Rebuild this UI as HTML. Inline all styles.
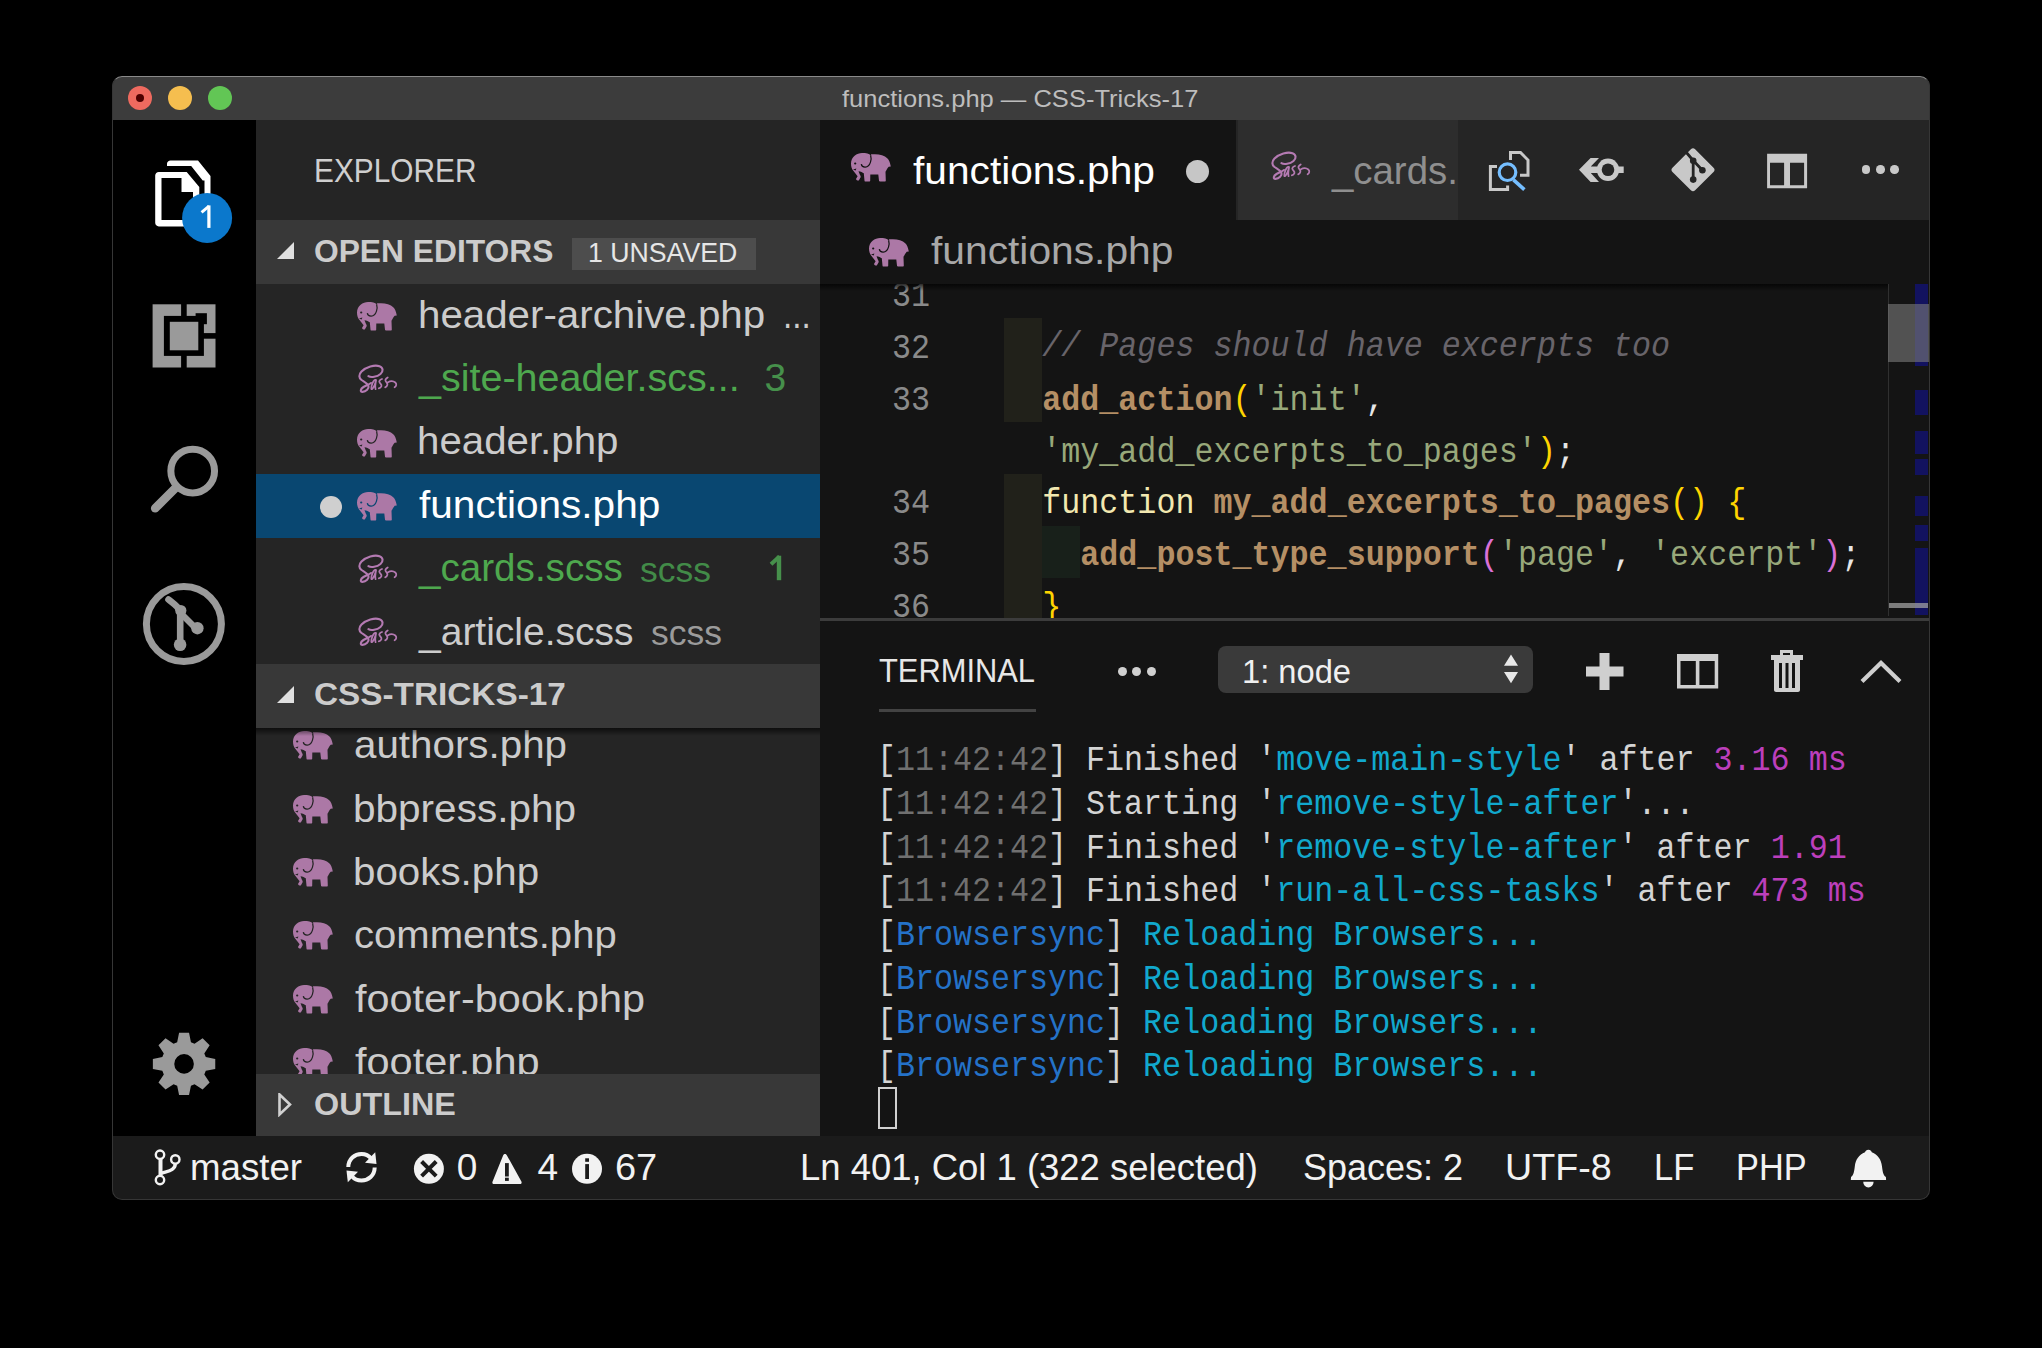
<!DOCTYPE html>
<html><head><meta charset="utf-8"><title>VS Code</title>
<style>
*{margin:0;padding:0;box-sizing:border-box}
html,body{width:2042px;height:1348px;background:#000;overflow:hidden}
body{font-family:"Liberation Sans",sans-serif}
.a{position:absolute}
.t{position:absolute;white-space:pre;transform-origin:0 0}
.sass{font-family:"Liberation Serif",serif;font-style:italic;color:#b67cb4;letter-spacing:-2px;transform:scaleX(1.05) rotate(-4deg)}
.mono{font-family:"Liberation Mono",monospace}
</style></head><body>

<div class="a" style="left:112px;top:76px;width:1818px;height:1124px;border-radius:10px;background:#1b1b1b;overflow:hidden">
</div>
<div class="a" style="left:112px;top:76px;width:1818px;height:1124px;border-radius:10px;overflow:hidden">
<div class="a" style="left:-112px;top:-76px;width:2042px;height:1348px">
<div class="a" style="left:112px;top:76px;width:1818px;height:44px;background:#3c3c3c"></div>
<div class="a" style="left:128px;top:86px;width:24px;height:24px;border-radius:50%;background:#ee6a5f"></div>
<div class="a" style="left:168px;top:86px;width:24px;height:24px;border-radius:50%;background:#f5be4f"></div>
<div class="a" style="left:208px;top:86px;width:24px;height:24px;border-radius:50%;background:#62c655"></div>
<div class="a" style="left:136px;top:94px;width:8px;height:8px;border-radius:50%;background:#4d0000"></div>
<div class="t" style="left:842.0px;top:87.4px;font-size:24.3px;line-height:24.3px;color:#bdbdbd;transform:scaleX(1.050);">functions.php — CSS-Tricks-17</div>
<div class="a" style="left:112px;top:120px;width:144px;height:1016px;background:#000"></div>
<div class="a" style="left:256px;top:120px;width:564px;height:1016px;background:#252525"></div>
<div class="t" style="left:313.9px;top:154.4px;font-size:33px;line-height:33px;color:#cfcfcf;transform:scaleX(0.904);">EXPLORER</div>
<div class="a" style="left:256px;top:220px;width:564px;height:64.2px;background:#383838"></div>
<svg class="a" style="left:277px;top:242px" width="18" height="18"><path d="M17,0 L17,17 L0,17 Z" fill="#e0e0e0"/></svg>
<div class="t" style="left:314.4px;top:235.8px;font-size:31px;line-height:31px;color:#cccccc;font-weight:bold;transform:scaleX(1.024);">OPEN EDITORS</div>
<div class="a" style="left:572px;top:238px;width:184px;height:32px;background:#4d4d4d"></div>
<div class="t" style="left:588.1px;top:239.1px;font-size:28px;line-height:28px;color:#e6e6e6;transform:scaleX(0.953);">1 UNSAVED</div>
<div class="a" style="left:256px;top:474.3px;width:564px;height:63.4px;background:#094771"></div>
<div class="a" style="left:319.6px;top:496.3px;width:22px;height:22px;border-radius:50%;background:#cfcfcf"></div>
<svg class="a" style="left:357.0px;top:302.2px" width="40" height="29" viewBox="5 6.4 40 29"><path d="M16,6.4 C11,6.4 5,10 5,17 C5,20 5.8,22.5 7.5,24.5 L11.6,29.6 L10,32.3 C10.5,33.5 11.8,34.3 12.8,33.8 L14.5,31 C15,30 14.5,29 14,28.3 L12.5,24.6 C14.5,25 16.8,25.8 17.8,26.7 L18.5,34.2 C18.6,34.8 19,35 19.5,35 L23.5,35 C24,35 24.2,34.7 24.2,34.2 L24.3,27.9 L32.3,27.9 L33,34.2 C33.1,34.7 33.5,35 34,35 L38.8,35 C39.4,35 39.8,34.6 39.8,34 L39.5,25.2 C40.5,23.5 41.5,21.5 42.7,20.2 L44.8,19.8 C44,16 43,13.5 41.5,12 C38.5,9 34,7.7 29,7.7 L25.3,7.7 L24.6,8.6 C23.5,7 20,6.4 16,6.4 Z" fill="#ac78a6"/><path d="M24.6,8.6 C25.3,11 25.3,13.5 24.5,15.5 C23.5,18.5 21.5,20.4 19.3,20.5 C17,20.6 15.5,19.2 15.3,17.6" fill="none" stroke="#252525" stroke-width="1.25"/><circle cx="9.2" cy="16.9" r="1.1" fill="#252525"/><path d="M7,22.9 L10.4,21.9 L9.6,23.9 Z" fill="#252525"/></svg>
<svg class="a" style="left:348.7px;top:357.5px" width="50" height="40" viewBox="0 0 50 40"><g fill="none" stroke="#b47ab2" stroke-linecap="round" stroke-linejoin="round"><path d="M19.4,18.2 C22,19.8 28,19 31.5,16 C34.5,13.5 34.3,9.5 30.5,8.2 C25.5,6.5 17,9 12.5,13.5 C9.5,16.5 9.8,20 12.5,22 C15,23.8 18.5,25 19.5,28 C20.3,30.5 17,33.8 13.5,33.9 C11,34 11.2,31 14.5,29 C17,27.5 20,26.5 22,25" stroke-width="2.1"/><path d="M26.4,21.8 C24.2,22 22,28 22.3,30.8 C22.6,32.3 25,29.8 26.9,23.2 M27.1,22 C26.5,25 25.8,28.5 26.6,31.2 M33,21 C31,21.8 29.6,23.2 30.6,24.6 C31.6,26 33,26.6 32.4,28.2 C31.9,29.5 30.8,30.2 29.8,30.4 M38.7,19.4 C37.2,20.2 36,21.5 36.6,23 C37.3,24.6 38.8,25.2 38.4,26.8 C38,28.3 37,29.2 36.2,29.4 M38.6,24.4 C40.8,23.2 44,22.6 46.3,24.5 C47.8,25.8 47.6,28.2 45.6,29.3" stroke-width="1.75"/></g></svg>
<svg class="a" style="left:357.0px;top:428.9px" width="40" height="29" viewBox="5 6.4 40 29"><path d="M16,6.4 C11,6.4 5,10 5,17 C5,20 5.8,22.5 7.5,24.5 L11.6,29.6 L10,32.3 C10.5,33.5 11.8,34.3 12.8,33.8 L14.5,31 C15,30 14.5,29 14,28.3 L12.5,24.6 C14.5,25 16.8,25.8 17.8,26.7 L18.5,34.2 C18.6,34.8 19,35 19.5,35 L23.5,35 C24,35 24.2,34.7 24.2,34.2 L24.3,27.9 L32.3,27.9 L33,34.2 C33.1,34.7 33.5,35 34,35 L38.8,35 C39.4,35 39.8,34.6 39.8,34 L39.5,25.2 C40.5,23.5 41.5,21.5 42.7,20.2 L44.8,19.8 C44,16 43,13.5 41.5,12 C38.5,9 34,7.7 29,7.7 L25.3,7.7 L24.6,8.6 C23.5,7 20,6.4 16,6.4 Z" fill="#ac78a6"/><path d="M24.6,8.6 C25.3,11 25.3,13.5 24.5,15.5 C23.5,18.5 21.5,20.4 19.3,20.5 C17,20.6 15.5,19.2 15.3,17.6" fill="none" stroke="#252525" stroke-width="1.25"/><circle cx="9.2" cy="16.9" r="1.1" fill="#252525"/><path d="M7,22.9 L10.4,21.9 L9.6,23.9 Z" fill="#252525"/></svg>
<svg class="a" style="left:357.0px;top:492.3px" width="40" height="29" viewBox="5 6.4 40 29"><path d="M16,6.4 C11,6.4 5,10 5,17 C5,20 5.8,22.5 7.5,24.5 L11.6,29.6 L10,32.3 C10.5,33.5 11.8,34.3 12.8,33.8 L14.5,31 C15,30 14.5,29 14,28.3 L12.5,24.6 C14.5,25 16.8,25.8 17.8,26.7 L18.5,34.2 C18.6,34.8 19,35 19.5,35 L23.5,35 C24,35 24.2,34.7 24.2,34.2 L24.3,27.9 L32.3,27.9 L33,34.2 C33.1,34.7 33.5,35 34,35 L38.8,35 C39.4,35 39.8,34.6 39.8,34 L39.5,25.2 C40.5,23.5 41.5,21.5 42.7,20.2 L44.8,19.8 C44,16 43,13.5 41.5,12 C38.5,9 34,7.7 29,7.7 L25.3,7.7 L24.6,8.6 C23.5,7 20,6.4 16,6.4 Z" fill="#ac78a6"/><path d="M24.6,8.6 C25.3,11 25.3,13.5 24.5,15.5 C23.5,18.5 21.5,20.4 19.3,20.5 C17,20.6 15.5,19.2 15.3,17.6" fill="none" stroke="#094771" stroke-width="1.25"/><circle cx="9.2" cy="16.9" r="1.1" fill="#094771"/><path d="M7,22.9 L10.4,21.9 L9.6,23.9 Z" fill="#094771"/></svg>
<svg class="a" style="left:348.7px;top:547.5px" width="50" height="40" viewBox="0 0 50 40"><g fill="none" stroke="#b47ab2" stroke-linecap="round" stroke-linejoin="round"><path d="M19.4,18.2 C22,19.8 28,19 31.5,16 C34.5,13.5 34.3,9.5 30.5,8.2 C25.5,6.5 17,9 12.5,13.5 C9.5,16.5 9.8,20 12.5,22 C15,23.8 18.5,25 19.5,28 C20.3,30.5 17,33.8 13.5,33.9 C11,34 11.2,31 14.5,29 C17,27.5 20,26.5 22,25" stroke-width="2.1"/><path d="M26.4,21.8 C24.2,22 22,28 22.3,30.8 C22.6,32.3 25,29.8 26.9,23.2 M27.1,22 C26.5,25 25.8,28.5 26.6,31.2 M33,21 C31,21.8 29.6,23.2 30.6,24.6 C31.6,26 33,26.6 32.4,28.2 C31.9,29.5 30.8,30.2 29.8,30.4 M38.7,19.4 C37.2,20.2 36,21.5 36.6,23 C37.3,24.6 38.8,25.2 38.4,26.8 C38,28.3 37,29.2 36.2,29.4 M38.6,24.4 C40.8,23.2 44,22.6 46.3,24.5 C47.8,25.8 47.6,28.2 45.6,29.3" stroke-width="1.75"/></g></svg>
<svg class="a" style="left:348.7px;top:610.9px" width="50" height="40" viewBox="0 0 50 40"><g fill="none" stroke="#b47ab2" stroke-linecap="round" stroke-linejoin="round"><path d="M19.4,18.2 C22,19.8 28,19 31.5,16 C34.5,13.5 34.3,9.5 30.5,8.2 C25.5,6.5 17,9 12.5,13.5 C9.5,16.5 9.8,20 12.5,22 C15,23.8 18.5,25 19.5,28 C20.3,30.5 17,33.8 13.5,33.9 C11,34 11.2,31 14.5,29 C17,27.5 20,26.5 22,25" stroke-width="2.1"/><path d="M26.4,21.8 C24.2,22 22,28 22.3,30.8 C22.6,32.3 25,29.8 26.9,23.2 M27.1,22 C26.5,25 25.8,28.5 26.6,31.2 M33,21 C31,21.8 29.6,23.2 30.6,24.6 C31.6,26 33,26.6 32.4,28.2 C31.9,29.5 30.8,30.2 29.8,30.4 M38.7,19.4 C37.2,20.2 36,21.5 36.6,23 C37.3,24.6 38.8,25.2 38.4,26.8 C38,28.3 37,29.2 36.2,29.4 M38.6,24.4 C40.8,23.2 44,22.6 46.3,24.5 C47.8,25.8 47.6,28.2 45.6,29.3" stroke-width="1.75"/></g></svg>
<svg class="a" style="left:760px;top:550px" width="30" height="35" viewBox="760 550 30 35"><rect x="776.8" y="555.7" width="4.4" height="24.5" fill="#46904b"/><path d="M771,564.3 L779.5,556.6" stroke="#46904b" stroke-width="4"/></svg>
<div class="t" style="left:417.9px;top:294.7px;font-size:39px;line-height:39px;color:#cccccc;transform:scaleX(1.033);">header-archive.php</div>
<div class="t" style="left:783.4px;top:294.7px;font-size:39px;line-height:39px;color:#cccccc;transform:scaleX(0.852);">...</div>
<div class="t" style="left:419.0px;top:358.0px;font-size:39px;line-height:39px;color:#4ea84e;transform:scaleX(1.013);">_site-header.scs...</div>
<div class="t" style="left:764.4px;top:358.0px;font-size:39px;line-height:39px;color:#46904b;">3</div>
<div class="t" style="left:417.3px;top:421.4px;font-size:39px;line-height:39px;color:#cccccc;transform:scaleX(1.032);">header.php</div>
<div class="t" style="left:419.0px;top:484.8px;font-size:39px;line-height:39px;color:#ffffff;transform:scaleX(1.040);">functions.php</div>
<div class="t" style="left:419.0px;top:548.1px;font-size:39px;line-height:39px;color:#4ea84e;transform:scaleX(0.990);">_cards.scss</div>
<div class="t" style="left:640.4px;top:552.0px;font-size:35px;line-height:35px;color:#428b48;transform:scaleX(1.015);">scss</div>
<div class="t" style="left:419.0px;top:611.5px;font-size:39px;line-height:39px;color:#cccccc;">_article.scss</div>
<div class="t" style="left:651.4px;top:615.4px;font-size:35px;line-height:35px;color:#9b9b9b;transform:scaleX(1.016);">scss</div>
<div class="a" style="left:256px;top:727.7px;width:564px;height:346px;overflow:hidden">
<div class="a" style="left:-256px;top:-727.7px;width:2042px;height:1348px">
<svg class="a" style="left:292.8px;top:731.1px" width="40" height="29" viewBox="5 6.4 40 29"><path d="M16,6.4 C11,6.4 5,10 5,17 C5,20 5.8,22.5 7.5,24.5 L11.6,29.6 L10,32.3 C10.5,33.5 11.8,34.3 12.8,33.8 L14.5,31 C15,30 14.5,29 14,28.3 L12.5,24.6 C14.5,25 16.8,25.8 17.8,26.7 L18.5,34.2 C18.6,34.8 19,35 19.5,35 L23.5,35 C24,35 24.2,34.7 24.2,34.2 L24.3,27.9 L32.3,27.9 L33,34.2 C33.1,34.7 33.5,35 34,35 L38.8,35 C39.4,35 39.8,34.6 39.8,34 L39.5,25.2 C40.5,23.5 41.5,21.5 42.7,20.2 L44.8,19.8 C44,16 43,13.5 41.5,12 C38.5,9 34,7.7 29,7.7 L25.3,7.7 L24.6,8.6 C23.5,7 20,6.4 16,6.4 Z" fill="#ac78a6"/><path d="M24.6,8.6 C25.3,11 25.3,13.5 24.5,15.5 C23.5,18.5 21.5,20.4 19.3,20.5 C17,20.6 15.5,19.2 15.3,17.6" fill="none" stroke="#252525" stroke-width="1.25"/><circle cx="9.2" cy="16.9" r="1.1" fill="#252525"/><path d="M7,22.9 L10.4,21.9 L9.6,23.9 Z" fill="#252525"/></svg>
<div class="t" style="left:354.0px;top:725.1px;font-size:39px;line-height:39px;color:#cccccc;transform:scaleX(1.034);">authors.php</div>
<svg class="a" style="left:292.8px;top:794.5px" width="40" height="29" viewBox="5 6.4 40 29"><path d="M16,6.4 C11,6.4 5,10 5,17 C5,20 5.8,22.5 7.5,24.5 L11.6,29.6 L10,32.3 C10.5,33.5 11.8,34.3 12.8,33.8 L14.5,31 C15,30 14.5,29 14,28.3 L12.5,24.6 C14.5,25 16.8,25.8 17.8,26.7 L18.5,34.2 C18.6,34.8 19,35 19.5,35 L23.5,35 C24,35 24.2,34.7 24.2,34.2 L24.3,27.9 L32.3,27.9 L33,34.2 C33.1,34.7 33.5,35 34,35 L38.8,35 C39.4,35 39.8,34.6 39.8,34 L39.5,25.2 C40.5,23.5 41.5,21.5 42.7,20.2 L44.8,19.8 C44,16 43,13.5 41.5,12 C38.5,9 34,7.7 29,7.7 L25.3,7.7 L24.6,8.6 C23.5,7 20,6.4 16,6.4 Z" fill="#ac78a6"/><path d="M24.6,8.6 C25.3,11 25.3,13.5 24.5,15.5 C23.5,18.5 21.5,20.4 19.3,20.5 C17,20.6 15.5,19.2 15.3,17.6" fill="none" stroke="#252525" stroke-width="1.25"/><circle cx="9.2" cy="16.9" r="1.1" fill="#252525"/><path d="M7,22.9 L10.4,21.9 L9.6,23.9 Z" fill="#252525"/></svg>
<div class="t" style="left:352.9px;top:788.5px;font-size:39px;line-height:39px;color:#cccccc;transform:scaleX(1.039);">bbpress.php</div>
<svg class="a" style="left:292.8px;top:857.9px" width="40" height="29" viewBox="5 6.4 40 29"><path d="M16,6.4 C11,6.4 5,10 5,17 C5,20 5.8,22.5 7.5,24.5 L11.6,29.6 L10,32.3 C10.5,33.5 11.8,34.3 12.8,33.8 L14.5,31 C15,30 14.5,29 14,28.3 L12.5,24.6 C14.5,25 16.8,25.8 17.8,26.7 L18.5,34.2 C18.6,34.8 19,35 19.5,35 L23.5,35 C24,35 24.2,34.7 24.2,34.2 L24.3,27.9 L32.3,27.9 L33,34.2 C33.1,34.7 33.5,35 34,35 L38.8,35 C39.4,35 39.8,34.6 39.8,34 L39.5,25.2 C40.5,23.5 41.5,21.5 42.7,20.2 L44.8,19.8 C44,16 43,13.5 41.5,12 C38.5,9 34,7.7 29,7.7 L25.3,7.7 L24.6,8.6 C23.5,7 20,6.4 16,6.4 Z" fill="#ac78a6"/><path d="M24.6,8.6 C25.3,11 25.3,13.5 24.5,15.5 C23.5,18.5 21.5,20.4 19.3,20.5 C17,20.6 15.5,19.2 15.3,17.6" fill="none" stroke="#252525" stroke-width="1.25"/><circle cx="9.2" cy="16.9" r="1.1" fill="#252525"/><path d="M7,22.9 L10.4,21.9 L9.6,23.9 Z" fill="#252525"/></svg>
<div class="t" style="left:352.9px;top:851.8px;font-size:39px;line-height:39px;color:#cccccc;transform:scaleX(1.034);">books.php</div>
<svg class="a" style="left:292.8px;top:921.2px" width="40" height="29" viewBox="5 6.4 40 29"><path d="M16,6.4 C11,6.4 5,10 5,17 C5,20 5.8,22.5 7.5,24.5 L11.6,29.6 L10,32.3 C10.5,33.5 11.8,34.3 12.8,33.8 L14.5,31 C15,30 14.5,29 14,28.3 L12.5,24.6 C14.5,25 16.8,25.8 17.8,26.7 L18.5,34.2 C18.6,34.8 19,35 19.5,35 L23.5,35 C24,35 24.2,34.7 24.2,34.2 L24.3,27.9 L32.3,27.9 L33,34.2 C33.1,34.7 33.5,35 34,35 L38.8,35 C39.4,35 39.8,34.6 39.8,34 L39.5,25.2 C40.5,23.5 41.5,21.5 42.7,20.2 L44.8,19.8 C44,16 43,13.5 41.5,12 C38.5,9 34,7.7 29,7.7 L25.3,7.7 L24.6,8.6 C23.5,7 20,6.4 16,6.4 Z" fill="#ac78a6"/><path d="M24.6,8.6 C25.3,11 25.3,13.5 24.5,15.5 C23.5,18.5 21.5,20.4 19.3,20.5 C17,20.6 15.5,19.2 15.3,17.6" fill="none" stroke="#252525" stroke-width="1.25"/><circle cx="9.2" cy="16.9" r="1.1" fill="#252525"/><path d="M7,22.9 L10.4,21.9 L9.6,23.9 Z" fill="#252525"/></svg>
<div class="t" style="left:354.0px;top:915.2px;font-size:39px;line-height:39px;color:#cccccc;transform:scaleX(1.027);">comments.php</div>
<svg class="a" style="left:292.8px;top:984.6px" width="40" height="29" viewBox="5 6.4 40 29"><path d="M16,6.4 C11,6.4 5,10 5,17 C5,20 5.8,22.5 7.5,24.5 L11.6,29.6 L10,32.3 C10.5,33.5 11.8,34.3 12.8,33.8 L14.5,31 C15,30 14.5,29 14,28.3 L12.5,24.6 C14.5,25 16.8,25.8 17.8,26.7 L18.5,34.2 C18.6,34.8 19,35 19.5,35 L23.5,35 C24,35 24.2,34.7 24.2,34.2 L24.3,27.9 L32.3,27.9 L33,34.2 C33.1,34.7 33.5,35 34,35 L38.8,35 C39.4,35 39.8,34.6 39.8,34 L39.5,25.2 C40.5,23.5 41.5,21.5 42.7,20.2 L44.8,19.8 C44,16 43,13.5 41.5,12 C38.5,9 34,7.7 29,7.7 L25.3,7.7 L24.6,8.6 C23.5,7 20,6.4 16,6.4 Z" fill="#ac78a6"/><path d="M24.6,8.6 C25.3,11 25.3,13.5 24.5,15.5 C23.5,18.5 21.5,20.4 19.3,20.5 C17,20.6 15.5,19.2 15.3,17.6" fill="none" stroke="#252525" stroke-width="1.25"/><circle cx="9.2" cy="16.9" r="1.1" fill="#252525"/><path d="M7,22.9 L10.4,21.9 L9.6,23.9 Z" fill="#252525"/></svg>
<div class="t" style="left:355.0px;top:978.6px;font-size:39px;line-height:39px;color:#cccccc;transform:scaleX(1.062);">footer-book.php</div>
<svg class="a" style="left:292.8px;top:1047.9px" width="40" height="29" viewBox="5 6.4 40 29"><path d="M16,6.4 C11,6.4 5,10 5,17 C5,20 5.8,22.5 7.5,24.5 L11.6,29.6 L10,32.3 C10.5,33.5 11.8,34.3 12.8,33.8 L14.5,31 C15,30 14.5,29 14,28.3 L12.5,24.6 C14.5,25 16.8,25.8 17.8,26.7 L18.5,34.2 C18.6,34.8 19,35 19.5,35 L23.5,35 C24,35 24.2,34.7 24.2,34.2 L24.3,27.9 L32.3,27.9 L33,34.2 C33.1,34.7 33.5,35 34,35 L38.8,35 C39.4,35 39.8,34.6 39.8,34 L39.5,25.2 C40.5,23.5 41.5,21.5 42.7,20.2 L44.8,19.8 C44,16 43,13.5 41.5,12 C38.5,9 34,7.7 29,7.7 L25.3,7.7 L24.6,8.6 C23.5,7 20,6.4 16,6.4 Z" fill="#ac78a6"/><path d="M24.6,8.6 C25.3,11 25.3,13.5 24.5,15.5 C23.5,18.5 21.5,20.4 19.3,20.5 C17,20.6 15.5,19.2 15.3,17.6" fill="none" stroke="#252525" stroke-width="1.25"/><circle cx="9.2" cy="16.9" r="1.1" fill="#252525"/><path d="M7,22.9 L10.4,21.9 L9.6,23.9 Z" fill="#252525"/></svg>
<div class="t" style="left:355.0px;top:1041.9px;font-size:39px;line-height:39px;color:#cccccc;transform:scaleX(1.064);">footer.php</div>
</div></div>
<div class="a" style="left:256px;top:727.7px;width:564px;height:8px;background:linear-gradient(#000000a0,#00000000)"></div>
<div class="a" style="left:256px;top:664.3px;width:564px;height:63.4px;background:#383838"></div>
<svg class="a" style="left:277px;top:686px" width="18" height="18"><path d="M17,0 L17,17 L0,17 Z" fill="#e0e0e0"/></svg>
<div class="t" style="left:314.3px;top:679.3px;font-size:31px;line-height:31px;color:#cccccc;font-weight:bold;transform:scaleX(1.075);">CSS-TRICKS-17</div>
<div class="a" style="left:256px;top:1073.6px;width:564px;height:62.4px;background:#383838"></div>
<svg class="a" style="left:278px;top:1093px" width="14" height="24"><path d="M1.5,1.5 L12,11.5 L1.5,21.5 Z" fill="none" stroke="#d0d0d0" stroke-width="2.6" stroke-linejoin="miter"/></svg>
<div class="t" style="left:314.2px;top:1088.6px;font-size:31px;line-height:31px;color:#cccccc;font-weight:bold;transform:scaleX(1.042);">OUTLINE</div>
<div class="a" style="left:820px;top:120px;width:1110px;height:100px;background:#252525"></div>
<div class="a" style="left:820px;top:120px;width:416px;height:100px;background:#141414"></div>
<div class="a" style="left:1236px;top:120px;width:222px;height:100px;background:#2d2d2d;border-left:2px solid #252525"></div>
<svg class="a" style="left:851.0px;top:152.5px" width="40" height="29" viewBox="5 6.4 40 29"><path d="M16,6.4 C11,6.4 5,10 5,17 C5,20 5.8,22.5 7.5,24.5 L11.6,29.6 L10,32.3 C10.5,33.5 11.8,34.3 12.8,33.8 L14.5,31 C15,30 14.5,29 14,28.3 L12.5,24.6 C14.5,25 16.8,25.8 17.8,26.7 L18.5,34.2 C18.6,34.8 19,35 19.5,35 L23.5,35 C24,35 24.2,34.7 24.2,34.2 L24.3,27.9 L32.3,27.9 L33,34.2 C33.1,34.7 33.5,35 34,35 L38.8,35 C39.4,35 39.8,34.6 39.8,34 L39.5,25.2 C40.5,23.5 41.5,21.5 42.7,20.2 L44.8,19.8 C44,16 43,13.5 41.5,12 C38.5,9 34,7.7 29,7.7 L25.3,7.7 L24.6,8.6 C23.5,7 20,6.4 16,6.4 Z" fill="#ac78a6"/><path d="M24.6,8.6 C25.3,11 25.3,13.5 24.5,15.5 C23.5,18.5 21.5,20.4 19.3,20.5 C17,20.6 15.5,19.2 15.3,17.6" fill="none" stroke="#141414" stroke-width="1.25"/><circle cx="9.2" cy="16.9" r="1.1" fill="#141414"/><path d="M7,22.9 L10.4,21.9 L9.6,23.9 Z" fill="#141414"/></svg>
<div class="t" style="left:912.7px;top:151.1px;font-size:39px;line-height:39px;color:#ffffff;transform:scaleX(1.043);">functions.php</div>
<div class="a" style="left:1185.5px;top:159.5px;width:23px;height:23px;border-radius:50%;background:#c6c6c6"></div>
<svg class="a" style="left:1262.0px;top:145.0px" width="50" height="40" viewBox="0 0 50 40"><g fill="none" stroke="#b47ab2" stroke-linecap="round" stroke-linejoin="round"><path d="M19.4,18.2 C22,19.8 28,19 31.5,16 C34.5,13.5 34.3,9.5 30.5,8.2 C25.5,6.5 17,9 12.5,13.5 C9.5,16.5 9.8,20 12.5,22 C15,23.8 18.5,25 19.5,28 C20.3,30.5 17,33.8 13.5,33.9 C11,34 11.2,31 14.5,29 C17,27.5 20,26.5 22,25" stroke-width="2.1"/><path d="M26.4,21.8 C24.2,22 22,28 22.3,30.8 C22.6,32.3 25,29.8 26.9,23.2 M27.1,22 C26.5,25 25.8,28.5 26.6,31.2 M33,21 C31,21.8 29.6,23.2 30.6,24.6 C31.6,26 33,26.6 32.4,28.2 C31.9,29.5 30.8,30.2 29.8,30.4 M38.7,19.4 C37.2,20.2 36,21.5 36.6,23 C37.3,24.6 38.8,25.2 38.4,26.8 C38,28.3 37,29.2 36.2,29.4 M38.6,24.4 C40.8,23.2 44,22.6 46.3,24.5 C47.8,25.8 47.6,28.2 45.6,29.3" stroke-width="1.75"/></g></svg>
<div class="a" style="left:1238px;top:120px;width:220px;height:100px;overflow:hidden"><div class="a" style="left:-1238px;top:-120px;width:2042px;height:400px">
<div class="t" style="left:1332.0px;top:151.1px;font-size:39px;line-height:39px;color:#8f8f8f;transform:scaleX(0.984);">_cards.</div>
</div></div>
<div class="a" style="left:820px;top:220px;width:1110px;height:398px;background:#141414"></div>
<svg class="a" style="left:869.0px;top:238.4px" width="40" height="29" viewBox="5 6.4 40 29"><path d="M16,6.4 C11,6.4 5,10 5,17 C5,20 5.8,22.5 7.5,24.5 L11.6,29.6 L10,32.3 C10.5,33.5 11.8,34.3 12.8,33.8 L14.5,31 C15,30 14.5,29 14,28.3 L12.5,24.6 C14.5,25 16.8,25.8 17.8,26.7 L18.5,34.2 C18.6,34.8 19,35 19.5,35 L23.5,35 C24,35 24.2,34.7 24.2,34.2 L24.3,27.9 L32.3,27.9 L33,34.2 C33.1,34.7 33.5,35 34,35 L38.8,35 C39.4,35 39.8,34.6 39.8,34 L39.5,25.2 C40.5,23.5 41.5,21.5 42.7,20.2 L44.8,19.8 C44,16 43,13.5 41.5,12 C38.5,9 34,7.7 29,7.7 L25.3,7.7 L24.6,8.6 C23.5,7 20,6.4 16,6.4 Z" fill="#ac78a6"/><path d="M24.6,8.6 C25.3,11 25.3,13.5 24.5,15.5 C23.5,18.5 21.5,20.4 19.3,20.5 C17,20.6 15.5,19.2 15.3,17.6" fill="none" stroke="#141414" stroke-width="1.25"/><circle cx="9.2" cy="16.9" r="1.1" fill="#141414"/><path d="M7,22.9 L10.4,21.9 L9.6,23.9 Z" fill="#141414"/></svg>
<div class="t" style="left:930.5px;top:231.0px;font-size:39px;line-height:39px;color:#a8a8a8;transform:scaleX(1.045);">functions.php</div>
<div class="a" style="left:1004.2px;top:318px;width:37.8px;height:104px;background:#21211a"></div>
<div class="a" style="left:1004.2px;top:474px;width:37.8px;height:144px;background:#21211a"></div>
<div class="a" style="left:1042px;top:526px;width:38px;height:52px;background:#18201a"></div>
<div class="a" style="left:820px;top:284.2px;width:1068px;height:333.8px;overflow:hidden">
<div class="a" style="left:-820px;top:-284.2px;width:2042px;height:1348px">
<div class="t mono" style="left:830px;width:100.0px;text-align:right;top:282.91px;font-size:31.712px;line-height:31.712px;color:#8a8a8a;transform:scaleY(1.08);transform-origin:0 24.29px">31</div>
<div class="t mono" style="left:830px;width:100.0px;text-align:right;top:334.81px;font-size:31.712px;line-height:31.712px;color:#8a8a8a;transform:scaleY(1.08);transform-origin:0 24.29px">32</div>
<div class="t mono" style="left:830px;width:100.0px;text-align:right;top:386.71px;font-size:31.712px;line-height:31.712px;color:#8a8a8a;transform:scaleY(1.08);transform-origin:0 24.29px">33</div>
<div class="t mono" style="left:830px;width:100.0px;text-align:right;top:490.41px;font-size:31.712px;line-height:31.712px;color:#8a8a8a;transform:scaleY(1.08);transform-origin:0 24.29px">34</div>
<div class="t mono" style="left:830px;width:100.0px;text-align:right;top:542.21px;font-size:31.712px;line-height:31.712px;color:#8a8a8a;transform:scaleY(1.08);transform-origin:0 24.29px">35</div>
<div class="t mono" style="left:830px;width:100.0px;text-align:right;top:594.01px;font-size:31.712px;line-height:31.712px;color:#8a8a8a;transform:scaleY(1.08);transform-origin:0 24.29px">36</div>
<div class="t mono" style="left:1004.20px;top:332.81px;font-size:31.712px;line-height:31.712px;transform:scaleY(1.080);transform-origin:0 24.29px;"><span style="color:#68646a;font-style:italic">  // Pages should have excerpts too</span></div>
<div class="t mono" style="left:1004.20px;top:386.71px;font-size:31.712px;line-height:31.712px;transform:scaleY(1.080);transform-origin:0 24.29px;"><span style="color:#e6e6e6">  </span><span style="color:#b58f65;font-weight:bold">add_action</span><span style="color:#ffd400">(</span><span style="color:#98a87a">'init'</span><span style="color:#e6e6e6">,</span></div>
<div class="t mono" style="left:1004.20px;top:438.51px;font-size:31.712px;line-height:31.712px;transform:scaleY(1.080);transform-origin:0 24.29px;"><span style="color:#e6e6e6">  </span><span style="color:#98a87a">'my_add_excerpts_to_pages'</span><span style="color:#ffd400">)</span><span style="color:#e6e6e6">;</span></div>
<div class="t mono" style="left:1004.20px;top:490.41px;font-size:31.712px;line-height:31.712px;transform:scaleY(1.080);transform-origin:0 24.29px;"><span style="color:#e6e6e6">  </span><span style="color:#f2e8b0">function</span><span style="color:#e6e6e6"> </span><span style="color:#b58f65;font-weight:bold">my_add_excerpts_to_pages</span><span style="color:#ffd400">()</span><span style="color:#e6e6e6"> </span><span style="color:#ffd400">{</span></div>
<div class="t mono" style="left:1004.20px;top:542.21px;font-size:31.712px;line-height:31.712px;transform:scaleY(1.080);transform-origin:0 24.29px;"><span style="color:#e6e6e6">    </span><span style="color:#b58f65;font-weight:bold">add_post_type_support</span><span style="color:#da70d6">(</span><span style="color:#98a87a">'page'</span><span style="color:#e6e6e6">, </span><span style="color:#98a87a">'excerpt'</span><span style="color:#da70d6">)</span><span style="color:#e6e6e6">;</span></div>
<div class="t mono" style="left:1004.20px;top:594.01px;font-size:31.712px;line-height:31.712px;transform:scaleY(1.080);transform-origin:0 24.29px;"><span style="color:#e6e6e6">  </span><span style="color:#ffd400">}</span></div>
</div></div>
<div class="a" style="left:820px;top:284.2px;width:1068px;height:7px;background:linear-gradient(#000000b0,#00000000)"></div>
<div class="a" style="left:1888px;top:284.2px;width:1.2px;height:331.5px;background:#303030"></div>
<div class="a" style="left:1915px;top:284.2px;width:13px;height:81.8px;background:#12125f"></div>
<div class="a" style="left:1915px;top:390.0px;width:13px;height:25.0px;background:#12125f"></div>
<div class="a" style="left:1915px;top:431.4px;width:13px;height:22.6px;background:#12125f"></div>
<div class="a" style="left:1915px;top:459.4px;width:13px;height:15.9px;background:#12125f"></div>
<div class="a" style="left:1915px;top:495.6px;width:13px;height:20.9px;background:#12125f"></div>
<div class="a" style="left:1915px;top:524.7px;width:13px;height:16.0px;background:#12125f"></div>
<div class="a" style="left:1915px;top:547.8px;width:13px;height:67.7px;background:#12125f"></div>
<div class="a" style="left:1888px;top:303.8px;width:42px;height:58.2px;background:rgba(121,121,121,0.62)"></div>
<div class="a" style="left:1889px;top:603px;width:39px;height:5px;background:rgba(160,160,160,0.75)"></div>
<div class="a" style="left:820px;top:618px;width:1110px;height:518px;background:#141414"></div>
<div class="a" style="left:820px;top:618px;width:1110px;height:3px;background:#3c3c3c"></div>
<div class="t" style="left:879.2px;top:654.5px;font-size:32.7px;line-height:32.7px;color:#e7e7e7;transform:scaleX(0.944);">TERMINAL</div>
<div class="a" style="left:879px;top:708.5px;width:157px;height:3px;background:#434343"></div>
<div class="a" style="left:1117.8px;top:667px;width:9.2px;height:9.2px;border-radius:50%;background:#d0d0d0"></div>
<div class="a" style="left:1132.2px;top:667px;width:9.2px;height:9.2px;border-radius:50%;background:#d0d0d0"></div>
<div class="a" style="left:1146.6px;top:667px;width:9.2px;height:9.2px;border-radius:50%;background:#d0d0d0"></div>
<div class="a" style="left:1218px;top:646px;width:315px;height:47.4px;border-radius:8px;background:#3a3a3a"></div>
<div class="t" style="left:1241.5px;top:654.6px;font-size:33px;line-height:33px;color:#f0f0f0;transform:scaleX(0.990);">1: node</div>
<svg class="a" style="left:1500px;top:650px" width="24" height="40"><path d="M4,15.8 L11,4.5 L18,15.8 Z M4,22 L11,33.3 L18,22 Z" fill="#e8e8e8"/></svg>
<svg class="a" style="left:1586px;top:652.8px" width="38" height="37"><path d="M13.5,0 H23.5 V13.5 H37.5 V23.5 H23.5 V37 H13.5 V23.5 H0 V13.5 H13.5 Z" fill="#cfcfcf"/></svg>
<svg class="a" style="left:1676.8px;top:653.9px" width="42" height="35"><path d="M0,0 H41.2 V34.5 H0 Z M3.5,7 V31 H18.8 V7 Z M22.4,7 V31 H37.7 V7 Z" fill="#cfcfcf" fill-rule="evenodd"/></svg>
<svg class="a" style="left:1770px;top:650px" width="34" height="42"><path d="M10,0 H23 V5 H33 V10 H30 V40 C30,41 29,42 28,42 H6 C5,42 4,41 4,40 V10 H1 V5 H10 Z M13,3 V5 H20 V3 Z M9,13 V38 H12 V13 Z M15.5,13 V38 H18.5 V13 Z M22,13 V38 H25 V13 Z" fill="#cfcfcf" fill-rule="evenodd"/></svg>
<svg class="a" style="left:1860px;top:659px" width="42" height="25"><path d="M2,22.5 L21,4 L40,22.5" fill="none" stroke="#cfcfcf" stroke-width="4.2"/></svg>
<div class="t mono" style="left:876.90px;top:747.11px;font-size:31.704px;line-height:31.704px;transform:scaleY(1.080);transform-origin:0 24.29px;"><span style="color:#d4d4d4">[</span><span style="color:#707070">11:42:42</span><span style="color:#d4d4d4">] Finished '</span><span style="color:#11a8cd">move-main-style</span><span style="color:#d4d4d4">' after </span><span style="color:#bc3fbc">3.16 ms</span></div>
<div class="t mono" style="left:876.90px;top:790.86px;font-size:31.704px;line-height:31.704px;transform:scaleY(1.080);transform-origin:0 24.29px;"><span style="color:#d4d4d4">[</span><span style="color:#707070">11:42:42</span><span style="color:#d4d4d4">] Starting '</span><span style="color:#11a8cd">remove-style-after</span><span style="color:#d4d4d4">'...</span></div>
<div class="t mono" style="left:876.90px;top:834.61px;font-size:31.704px;line-height:31.704px;transform:scaleY(1.080);transform-origin:0 24.29px;"><span style="color:#d4d4d4">[</span><span style="color:#707070">11:42:42</span><span style="color:#d4d4d4">] Finished '</span><span style="color:#11a8cd">remove-style-after</span><span style="color:#d4d4d4">' after </span><span style="color:#bc3fbc">1.91</span></div>
<div class="t mono" style="left:876.90px;top:878.36px;font-size:31.704px;line-height:31.704px;transform:scaleY(1.080);transform-origin:0 24.29px;"><span style="color:#d4d4d4">[</span><span style="color:#707070">11:42:42</span><span style="color:#d4d4d4">] Finished '</span><span style="color:#11a8cd">run-all-css-tasks</span><span style="color:#d4d4d4">' after </span><span style="color:#bc3fbc">473 ms</span></div>
<div class="t mono" style="left:876.90px;top:922.11px;font-size:31.704px;line-height:31.704px;transform:scaleY(1.080);transform-origin:0 24.29px;"><span style="color:#d4d4d4">[</span><span style="color:#2472c8">Browsersync</span><span style="color:#d4d4d4">] </span><span style="color:#11a8cd">Reloading Browsers...</span></div>
<div class="t mono" style="left:876.90px;top:965.86px;font-size:31.704px;line-height:31.704px;transform:scaleY(1.080);transform-origin:0 24.29px;"><span style="color:#d4d4d4">[</span><span style="color:#2472c8">Browsersync</span><span style="color:#d4d4d4">] </span><span style="color:#11a8cd">Reloading Browsers...</span></div>
<div class="t mono" style="left:876.90px;top:1009.61px;font-size:31.704px;line-height:31.704px;transform:scaleY(1.080);transform-origin:0 24.29px;"><span style="color:#d4d4d4">[</span><span style="color:#2472c8">Browsersync</span><span style="color:#d4d4d4">] </span><span style="color:#11a8cd">Reloading Browsers...</span></div>
<div class="t mono" style="left:876.90px;top:1053.36px;font-size:31.704px;line-height:31.704px;transform:scaleY(1.080);transform-origin:0 24.29px;"><span style="color:#d4d4d4">[</span><span style="color:#2472c8">Browsersync</span><span style="color:#d4d4d4">] </span><span style="color:#11a8cd">Reloading Browsers...</span></div>
<div class="a" style="left:878.3px;top:1086.5px;width:19px;height:42.5px;border:2.6px solid #d0d0d0"></div>
<div class="a" style="left:112px;top:1136px;width:1818px;height:64px;background:#1b1b1b"></div>
<div class="t" style="left:190.0px;top:1149.2px;font-size:37px;line-height:37px;color:#f2f2f2;transform:scaleX(0.991);">master</div>
<div class="t" style="left:456.8px;top:1149.2px;font-size:37px;line-height:37px;color:#f2f2f2;">0</div>
<div class="t" style="left:537.4px;top:1149.2px;font-size:37px;line-height:37px;color:#f2f2f2;">4</div>
<div class="t" style="left:614.9px;top:1149.2px;font-size:37px;line-height:37px;color:#f2f2f2;transform:scaleX(1.026);">67</div>
<div class="t" style="left:800.4px;top:1149.2px;font-size:37px;line-height:37px;color:#f2f2f2;transform:scaleX(0.985);">Ln 401, Col 1 (322 selected)</div>
<div class="t" style="left:1303.1px;top:1149.2px;font-size:37px;line-height:37px;color:#f2f2f2;transform:scaleX(0.973);">Spaces: 2</div>
<div class="t" style="left:1504.7px;top:1149.2px;font-size:37px;line-height:37px;color:#f2f2f2;transform:scaleX(1.018);">UTF-8</div>
<div class="t" style="left:1654.0px;top:1149.2px;font-size:37px;line-height:37px;color:#f2f2f2;transform:scaleX(0.936);">LF</div>
<div class="t" style="left:1736.2px;top:1149.2px;font-size:37px;line-height:37px;color:#f2f2f2;transform:scaleX(0.928);">PHP</div>
<svg class="a" style="left:140.0px;top:150.0px;" width="100.0" height="100.0" viewBox="0 0 100.0 100.0"><path d="M27,16 L27,13.8 C27,11.9 28.6,10.4 30.5,10.4 L58,10.4 L70.5,26 L70.5,62 L64.5,62 L64.5,30.4 L62.7,30.4 L51.2,16 Z" fill="#fff"/><path d="M15.2,25.5 C15.2,23.5 16.8,21.9 18.8,21.9 L46.7,21.9 L59.3,37.1 L59.3,76.4 L18.8,76.4 C16.8,76.4 15.2,74.8 15.2,72.8 Z M21.5,28 L21.5,70.1 L53,70.1 L53,41.9 L41.5,41.9 L41.5,28 Z" fill="#fff" fill-rule="evenodd"/><circle cx="67.1" cy="67.9" r="25" fill="#0b78cc"/></svg>
<svg class="a" style="left:140.0px;top:150.0px;" width="100.0" height="100.0" viewBox="0 0 100.0 100.0"><rect x="67.3" y="55.4" width="3.2" height="22.5" fill="#fff"/><path d="M61.6,62.3 L69,56.2" stroke="#fff" stroke-width="3"/></svg>
<svg class="a" style="left:144.0px;top:296.0px;" width="80.0" height="80.0" viewBox="0 0 80.0 80.0"><rect x="8.6" y="8.3" width="62.9" height="63.2" fill="#9a9a9a"/><rect x="37.1" y="7" width="5.6" height="14" fill="#000"/><rect x="37.1" y="58.9" width="5.6" height="14" fill="#000"/><rect x="58.9" y="37.1" width="14" height="5.6" fill="#000"/><rect x="19.9" y="19.9" width="40" height="40" fill="#000"/><rect x="51.6" y="17.2" width="11.3" height="11" fill="#000"/><rect x="25.8" y="25.8" width="28.5" height="28.5" fill="#9a9a9a"/></svg>
<svg class="a" style="left:140.0px;top:436.0px;" width="90.0" height="90.0" viewBox="0 0 90.0 90.0"><circle cx="52.7" cy="35.05" r="21.85" fill="none" stroke="#9a9a9a" stroke-width="7"/><path d="M36.5,51 L15.2,72.3" stroke="#9a9a9a" stroke-width="8.6" stroke-linecap="round"/></svg>
<svg class="a" style="left:134.0px;top:574.0px;" width="100.0" height="100.0" viewBox="0 0 100.0 100.0"><circle cx="49.9" cy="50.05" r="37.5" fill="none" stroke="#9a9a9a" stroke-width="7"/><path d="M34.5,25.5 C40,30 45.5,33 46.2,40 L46.2,68" fill="none" stroke="#9a9a9a" stroke-width="6.6" stroke-linecap="round"/><path d="M49.5,42 L62.5,55" fill="none" stroke="#9a9a9a" stroke-width="6.4" stroke-linecap="round"/><circle cx="46.8" cy="36.5" r="5.6" fill="#9a9a9a"/><circle cx="46.1" cy="70.8" r="6.3" fill="#9a9a9a"/><circle cx="63.4" cy="54.2" r="6.2" fill="#9a9a9a"/></svg>
<svg class="a" style="left:144.0px;top:1024.0px;" width="80.0" height="80.0" viewBox="0 0 80.0 80.0"><path d="M33.17,18.17 L35.08,8.70 L45.04,8.70 L46.95,18.17 L50.55,19.66 L58.60,14.31 L65.65,21.36 L60.30,29.41 L61.79,33.01 L71.26,34.92 L71.26,44.88 L61.79,46.79 L60.30,50.39 L65.65,58.44 L58.60,65.49 L50.55,60.14 L46.95,61.63 L45.04,71.10 L35.08,71.10 L33.17,61.63 L29.57,60.14 L21.52,65.49 L14.47,58.44 L19.82,50.39 L18.33,46.79 L8.86,44.88 L8.86,34.92 L18.33,33.01 L19.82,29.41 L14.47,21.36 L21.52,14.31 L29.57,19.66 Z M40.06,39.90 m-9.8,0 a9.8,9.8 0 1,0 19.6,0 a9.8,9.8 0 1,0 -19.6,0 Z" fill="#9a9a9a" fill-rule="evenodd"/></svg>
<svg class="a" style="left:1400.0px;top:110.0px;" width="160.0" height="130.0" viewBox="0 0 160.0 130.0"><path d="M110.5,50 L110.5,42.5 L120.5,42.5 L128,50 L128,65.2 L120,65.2" fill="none" stroke="#c8c8c8" stroke-width="3"/><path d="M97,56.5 L90.4,56.5 L90.4,79.5 L107.6,79.5 L107.6,75.5" fill="none" stroke="#c8c8c8" stroke-width="3"/><circle cx="107.5" cy="62.2" r="8.3" fill="none" stroke="#75beff" stroke-width="3.2"/><path d="M113.5,69.8 L124.4,79.6" stroke="#75beff" stroke-width="3.6"/></svg>
<svg class="a" style="left:1570.0px;top:140.0px;" width="60.0" height="60.0" viewBox="0 0 60.0 60.0"><path d="M9,29.8 L20.6,18 L29,18 L20.8,26.6 L53.7,26.6 L53.7,33.1 L20.8,33.1 L29,41.9 L20.6,41.9 Z" fill="#c8c8c8"/><circle cx="38" cy="29.8" r="11.2" fill="#c8c8c8"/><circle cx="38" cy="29.8" r="6.3" fill="#252525"/></svg>
<svg class="a" style="left:1663.0px;top:140.0px;" width="60.0" height="60.0" viewBox="0 0 60.0 60.0"><rect x="14" y="13.8" width="32" height="32" rx="3" ry="3" transform="rotate(45 30 29.8)" fill="#c8c8c8"/><path d="M23,12 L30.2,20.5 L30.2,39.6 M30.2,20.5 L39.4,30.2" fill="none" stroke="#252525" stroke-width="2.8"/><circle cx="30.2" cy="20.8" r="3.3" fill="#252525"/><circle cx="30.2" cy="39.6" r="3.3" fill="#252525"/><circle cx="39.4" cy="30.2" r="3.3" fill="#252525"/></svg>
<svg class="a" style="left:1750.0px;top:140.0px;" width="70.0" height="60.0" viewBox="0 0 70.0 60.0"><path d="M17.1,13.7 H57.1 V48.2 H17.1 Z M20,22.7 V45.3 H34.1 V22.7 Z M40,22.7 V45.3 H54.1 V22.7 Z" fill="#c8c8c8" fill-rule="evenodd"/></svg>
<div class="a" style="left:1861.7px;top:165.1px;width:8.6px;height:8.6px;border-radius:50%;background:#c8c8c8"></div>
<div class="a" style="left:1876.0px;top:165.1px;width:8.6px;height:8.6px;border-radius:50%;background:#c8c8c8"></div>
<div class="a" style="left:1890.4px;top:165.1px;width:8.6px;height:8.6px;border-radius:50%;background:#c8c8c8"></div>
<svg class="a" style="left:145.0px;top:1140.0px;" width="45.0" height="56.0" viewBox="0 0 45.0 56.0"><circle cx="15" cy="14.7" r="4.2" fill="none" stroke="#f2f2f2" stroke-width="2.4"/><circle cx="15" cy="40" r="4.2" fill="none" stroke="#f2f2f2" stroke-width="2.4"/><circle cx="30.3" cy="19.4" r="4.2" fill="none" stroke="#f2f2f2" stroke-width="2.4"/><path d="M15.5,19 L15.5,35.8" stroke="#f2f2f2" stroke-width="4"/><path d="M30.3,23.6 C30.3,31 22,31 15.5,33.5" fill="none" stroke="#f2f2f2" stroke-width="3.4"/></svg>
<svg class="a" style="left:340.0px;top:1146.0px;" width="44.0" height="44.0" viewBox="0 0 44.0 44.0"><path d="M8.3,21 C8.5,13 14.5,8 21.5,8 C25.5,8 29,9.8 31.2,12.6" fill="none" stroke="#f2f2f2" stroke-width="4"/><path d="M35.2,6.3 L36.5,18 L25,16.7 Z" fill="#f2f2f2"/><path d="M34.7,21.5 C34.5,29.5 28.5,34.5 21.5,34.5 C17.5,34.5 14,32.7 11.8,29.9" fill="none" stroke="#f2f2f2" stroke-width="4"/><path d="M7.8,36.2 L6.5,24.5 L18,25.8 Z" fill="#f2f2f2"/></svg>
<svg class="a" style="left:405.0px;top:1144.0px;" width="260.0" height="50.0" viewBox="0 0 260.0 50.0"><circle cx="23.9" cy="24.8" r="15" fill="#f2f2f2"/><path d="M16.6,17.5 L31.2,32.1 M31.2,17.5 L16.6,32.1" stroke="#1b1b1b" stroke-width="4"/><path d="M100,9.9 C100.8,9.9 101.3,10.3 101.8,11.2 L116.4,37.5 C117,38.6 116.5,40.1 115,40.1 L88.9,40.1 C87.5,40.1 87,38.6 87.6,37.5 L98.2,11.2 C98.7,10.3 99.2,9.9 100,9.9 Z" fill="#f2f2f2"/><rect x="100" y="19.1" width="3.8" height="13.4" fill="#1b1b1b"/><rect x="100" y="33.7" width="3.8" height="3.2" fill="#1b1b1b"/><circle cx="182" cy="24.8" r="15" fill="#f2f2f2"/><rect x="180.2" y="14.3" width="3.8" height="3.5" fill="#1b1b1b"/><rect x="180.2" y="20.1" width="3.8" height="14.9" fill="#1b1b1b"/></svg>
<svg class="a" style="left:1830.0px;top:1140.0px;" width="80.0" height="56.0" viewBox="0 0 80.0 56.0"><path d="M38.4,9.8 C36.5,9.8 35.5,11 35,12.2 C29,14.5 25.5,19.5 24.8,26.5 C24.2,31 23.8,35 21,37 L20.8,40.1 L56.1,40.1 L55.9,37 C53,35 52.6,31 52,26.5 C51.3,19.5 47.8,14.5 41.8,12.2 C41.3,11 40.3,9.8 38.4,9.8 Z" fill="#f2f2f2"/><path d="M33.2,41.8 A5.2,5.6 0 0 0 43.6,41.8 Z" fill="#f2f2f2"/></svg>
<div class="a" style="left:112px;top:76px;width:1818px;height:1124px;border-radius:10px;border:1.3px solid #363636;border-top-color:#8a8a8a"></div>
</div></div>
</body></html>
